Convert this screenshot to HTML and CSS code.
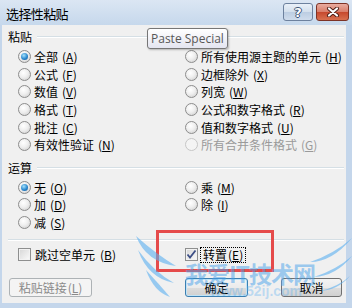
FILE: index.html
```html
<!DOCTYPE html>
<html lang="zh-CN">
<head>
    <meta charset="UTF-8">
    <title>选择性粘贴</title>
    <link rel="stylesheet" href="styles.css">
</head>
<body>
<div class="window">
    <div class="titlebar">
        <span class="title">选择性粘贴</span>
        <div class="caption-btns">
            <span class="cbtn help">?</span>
            <span class="cbtn close">
                <svg width="14" height="10" viewBox="0 0 14 10">
                    <path d="M3 1.5 L11 8.5 M11 1.5 L3 8.5" stroke="#4a1c14" stroke-width="4" stroke-linecap="round"/>
                    <path d="M3 1.5 L11 8.5 M11 1.5 L3 8.5" stroke="#fff" stroke-width="2.2" stroke-linecap="round"/>
                </svg>
            </span>
        </div>
    </div>

    <div class="client">
        <div class="group"><span>粘贴</span><i class="rule"></i></div>
        <div class="options">
            <label class="opt"><i class="radio on"></i>全部<span class="key">(<u>A</u>)</span></label>
            <label class="opt"><i class="radio"></i>所有使用源主题的单元<span class="key">(<u>H</u>)</span></label>
            <label class="opt"><i class="radio"></i>公式<span class="key">(<u>F</u>)</span></label>
            <label class="opt"><i class="radio"></i>边框除外<span class="key">(<u>X</u>)</span></label>
            <label class="opt"><i class="radio"></i>数值<span class="key">(<u>V</u>)</span></label>
            <label class="opt"><i class="radio"></i>列宽<span class="key">(<u>W</u>)</span></label>
            <label class="opt"><i class="radio"></i>格式<span class="key">(<u>T</u>)</span></label>
            <label class="opt"><i class="radio"></i>公式和数字格式<span class="key">(<u>R</u>)</span></label>
            <label class="opt"><i class="radio"></i>批注<span class="key">(<u>C</u>)</span></label>
            <label class="opt"><i class="radio"></i>值和数字格式<span class="key">(<u>U</u>)</span></label>
            <label class="opt"><i class="radio"></i>有效性验证<span class="key">(<u>N</u>)</span></label>
            <label class="opt disabled"><i class="radio"></i>所有合并条件格式<span class="key">(<u>G</u>)</span></label>
        </div>

        <div class="group ops"><span>运算</span><i class="rule"></i></div>
        <div class="options">
            <label class="opt"><i class="radio on"></i>无<span class="key">(<u>O</u>)</span></label>
            <label class="opt"><i class="radio"></i>乘<span class="key">(<u>M</u>)</span></label>
            <label class="opt"><i class="radio"></i>加<span class="key">(<u>D</u>)</span></label>
            <label class="opt"><i class="radio"></i>除<span class="key">(<u>I</u>)</span></label>
            <label class="opt"><i class="radio"></i>减<span class="key">(<u>S</u>)</span></label>
        </div>

        <div class="sep"></div>

        <div class="checks">
            <label class="opt"><i class="check"></i>跳过空单元<span class="key">(<u>B</u>)</span></label>
            <label class="opt tight">
                <i class="check">
                    <svg width="11" height="11" viewBox="0 0 11 11"><path d="M1.5 5.5 L4 8.5 L9.5 1.5" fill="none" stroke="#3d4f86" stroke-width="1.8"/></svg>
                </i>
                <span class="focus">转置<span class="key">(<u>E</u>)</span></span>
            </label>
        </div>

        <div class="buttons">
            <span class="btn disabled link">粘贴链接<span class="key">(<u>L</u>)</span></span>
            <span class="spacer"></span>
            <span class="btn default">确定</span>
            <span class="btn cancel">取消</span>
        </div>
    </div>

    <div class="tooltip">Paste Special</div>
    <div class="annotation"></div>

    <!-- 水印 -->
    <svg class="wings" width="352" height="308" viewBox="0 0 352 308">
        <path d="M136 236 Q146 262 176 266 Q156 254 136 236 Z"/>
        <path d="M138 250 Q148 278 174 283 Q154 272 138 250 Z"/>
        <path d="M146 270 Q154 292 170 297 Q159 284 146 270 Z"/>
        <path d="M310 262 Q332 262 352 238 Q334 254 310 262 Z"/>
        <path d="M314 277 Q336 276 352 256 Q336 270 314 277 Z"/>
        <path d="M320 291 Q338 290 350 276 Q338 287 320 291 Z"/>
    </svg>
    <div class="watermark">我爱IT技术网</div>
    <div class="watermark-url">www.52ij.com</div>
</div>
</body>
</html>
```

FILE: styles.css
```css
body {
    margin: 0;
    font-family: "Noto Sans CJK SC", "Liberation Sans", sans-serif;
    font-size: 12px;
    color: #000;
}
.window {
    position: relative;
    width: 352px;
    height: 308px;
    background-color: #c4d6eb;
    display: flex;
    flex-direction: column;
    overflow: hidden;
}
.titlebar {
    height: 25px;
    flex: none;
    display: flex;
    justify-content: space-between;
    padding: 0 3px 0 6px;
    background: linear-gradient(#dbe6f3, #c6d8ec);
}
.title {
    font-size: 13px;
    letter-spacing: -0.6px;
    line-height: 25px;
    padding-top: 1px;
}
.caption-btns {
    display: flex;
    gap: 3px;
    margin-top: 3px;
}
.cbtn {
    height: 18px;
    box-sizing: border-box;
    border: 1px solid;
    border-radius: 3px;
    display: flex;
    align-items: center;
    justify-content: center;
}
.help {
    width: 30px;
    border-color: #6d819e;
    background: linear-gradient(#e9f0f8, #d3dfec 50%, #bccde2 51%, #cfdcec);
    color: #fff;
    font-family: "DejaVu Sans", sans-serif;
    font-weight: bold;
    font-size: 13px;
    text-shadow: 1px 0 #3d5475, -1px 0 #3d5475, 0 1px #3d5475, 0 -1px #3d5475;
}
.close {
    width: 33px;
    border-color: #7d3326;
    background: linear-gradient(#e9aca0, #d87d69 50%, #c6482d 51%, #d8704f);
}
.client {
    flex: 1;
    margin: 0 6px 5px 2px;
    padding: 4px 2px 0 6px;
    background-color: #f0f0f0;
}
.group {
    display: flex;
    align-items: center;
    height: 16px;
    line-height: 16px;
}
.group.ops {
    margin-top: 6px;
}
.group .rule {
    flex: 1;
    margin-left: 5px;
    border-top: 1px solid #d5dfe5;
    border-bottom: 1px solid #fff;
}
.options {
    display: grid;
    grid-template-columns: 167px 1fr;
    grid-auto-rows: 17.6px;
    padding-left: 10px;
    margin-top: 3px;
}
.opt {
    display: flex;
    align-items: center;
    gap: 3px;
    white-space: nowrap;
}
.opt.disabled {
    color: #9a9a9a;
}
.key {
    margin-left: 1px;
}
.radio {
    position: relative;
    flex: none;
    width: 13px;
    height: 13px;
    box-sizing: border-box;
    border-radius: 50%;
    border: 1px solid #8d8d8d;
    background: radial-gradient(circle at 40% 35%, #fff, #efefef 45%, #c9c9c9);
}
.radio.on::after {
    content: "";
    position: absolute;
    left: 2px;
    top: 2px;
    width: 7px;
    height: 7px;
    border-radius: 50%;
    background: radial-gradient(circle at 40% 35%, #a6e2fc, #2b89cf 55%, #124f8d);
}
.disabled .radio {
    border-color: #c6c6c6;
    background: #f4f4f4;
}
.sep {
    margin-top: 8px;
    border-top: 1px solid #d5dfe5;
    border-bottom: 1px solid #fff;
}
.checks {
    display: grid;
    grid-template-columns: 167px 1fr;
    padding-left: 10px;
    height: 16px;
    margin-top: 5px;
}
.checks .opt {
    gap: 4px;
}
.checks .opt.tight {
    gap: 2px;
}
.check {
    flex: none;
    width: 13px;
    height: 13px;
    box-sizing: border-box;
    border: 1px solid #8e8f8f;
    background: linear-gradient(135deg, #d6d6d6, #fbfbfb);
    box-shadow: inset 0 0 0 1px #f2f2f2;
    display: flex;
    align-items: center;
    justify-content: center;
}
.focus {
    border: 1px dotted #000;
    padding: 0 2px;
    line-height: 14px;
}
.buttons {
    display: flex;
    margin-top: 16px;
    padding-right: 2px;
}
.spacer {
    flex: 1;
}
.btn {
    height: 19px;
    box-sizing: border-box;
    border: 1px solid #707070;
    border-radius: 3px;
    background: linear-gradient(#f3f3f3, #ebebeb 50%, #dddddd 51%, #d0d0d0);
    display: flex;
    align-items: center;
    justify-content: center;
}
.btn.link {
    width: 83px;
    margin-left: 1px;
}
.btn.disabled {
    border-color: #adb2b5;
    background: #f4f4f4;
    color: #8a8a8a;
}
.btn.default {
    width: 63px;
    border-color: #3c7fb1;
    box-shadow: inset 0 0 0 1px #bfe4f8;
}
.btn.cancel {
    width: 61px;
    margin-left: 33px;
}
.tooltip {
    position: absolute;
    left: 147px;
    top: 28px;
    width: 81px;
    height: 21px;
    box-sizing: border-box;
    border: 1px solid #767676;
    border-radius: 3px;
    background: linear-gradient(#ffffff, #e4e5f0);
    box-shadow: 1px 1px 2px rgba(0,0,0,0.25);
    color: #575757;
    font-family: "Open Sans", "Noto Sans", sans-serif;
    font-size: 12px;
    line-height: 19px;
    padding-left: 3px;
}
.annotation {
    position: absolute;
    left: 156px;
    top: 230px;
    width: 118px;
    height: 42px;
    box-sizing: border-box;
    border: 3px solid #e54b4b;
}
.wings {
    position: absolute;
    left: 0;
    top: 0;
    pointer-events: none;
}
.wings path {
    fill: rgba(90, 175, 240, 0.6);
}
.watermark {
    position: absolute;
    left: 185px;
    top: 256px;
    font-size: 23px;
    font-weight: bold;
    letter-spacing: -1px;
    color: rgba(70, 160, 235, 0.5);
    pointer-events: none;
}
.watermark-url {
    position: absolute;
    left: 210px;
    top: 283px;
    font-family: "Liberation Sans", sans-serif;
    font-size: 14px;
    font-weight: bold;
    color: rgba(90, 175, 240, 0.35);
    pointer-events: none;
}
```
